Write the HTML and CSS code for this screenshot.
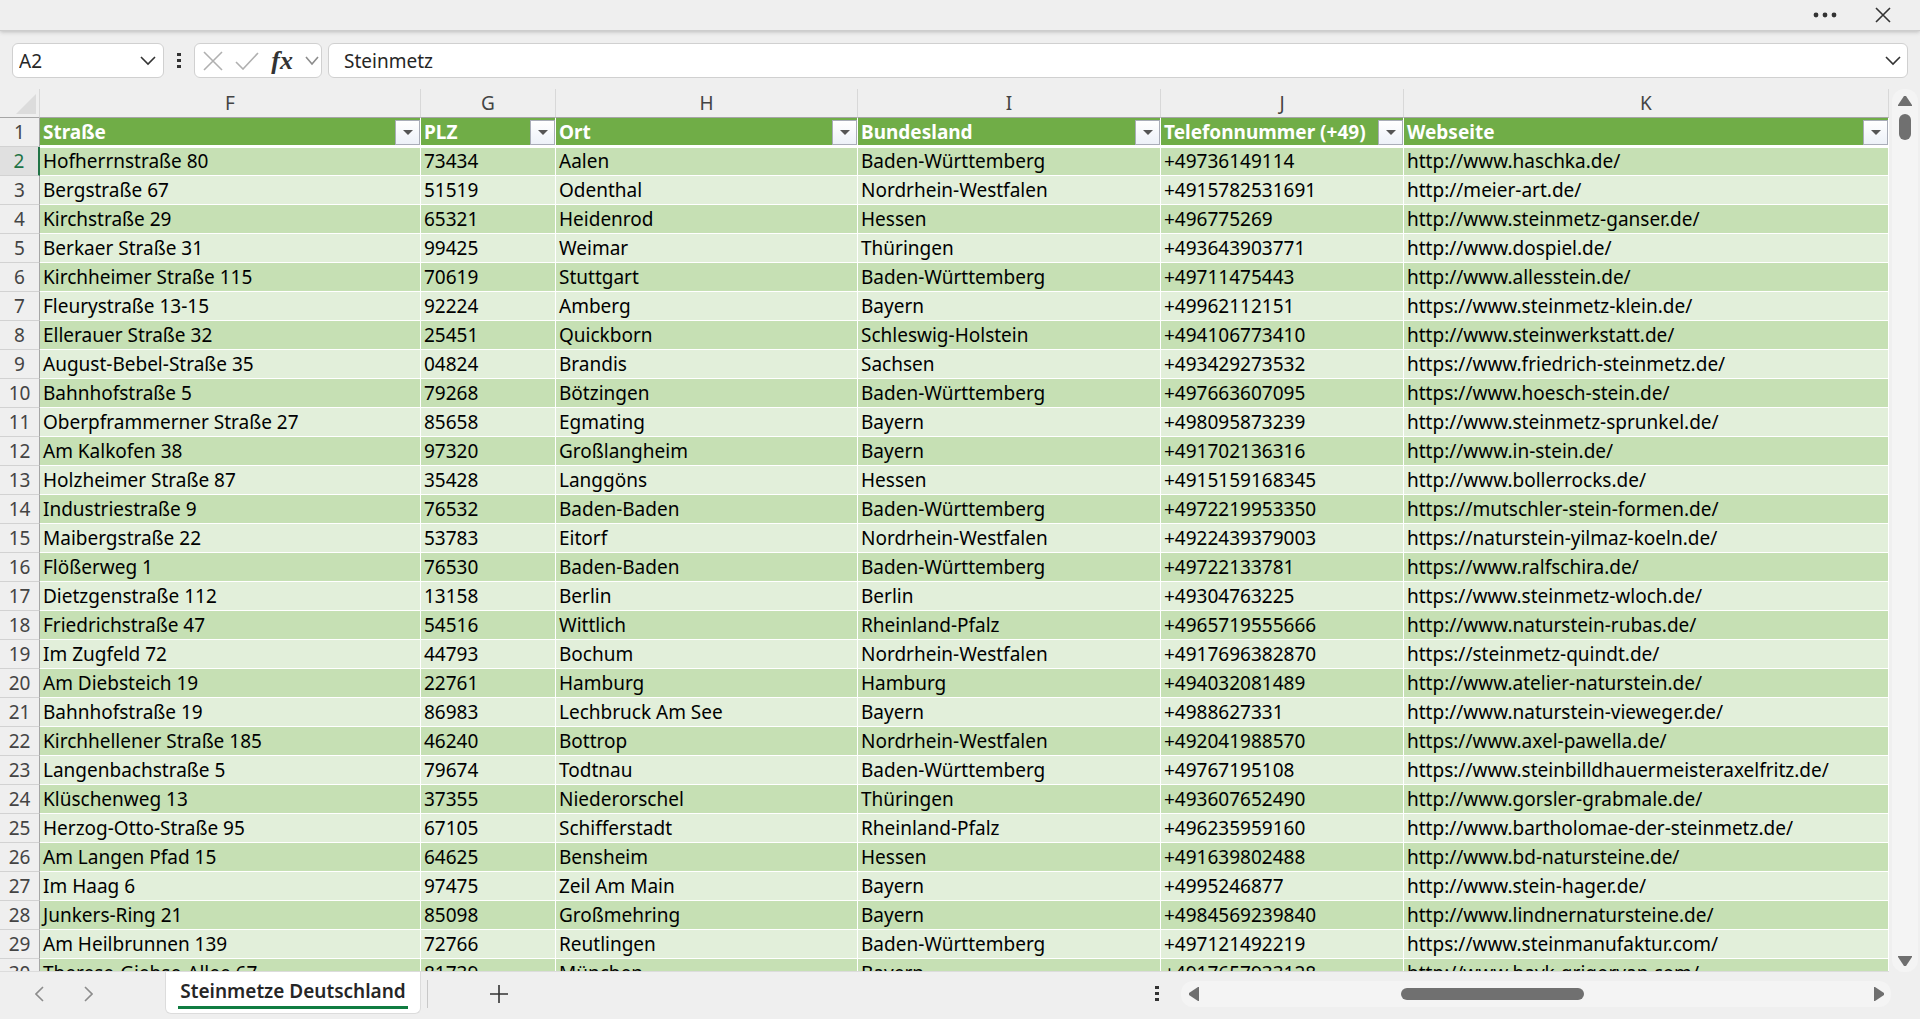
FILE: index.html
```html
<!DOCTYPE html>
<html lang="de">
    <head>
        <meta charset="utf-8">
        <title>Steinmetze Deutschland</title>
        <link rel="stylesheet" href="styles.css">
    </head>

    <body>
        <div class="topBar">
            <button class="iconButton" aria-label="Mehr">
                <svg width="24" height="6" viewBox="0 0 24 6"><circle cx="3" cy="3" r="2.4"/><circle cx="12" cy="3" r="2.4"/><circle cx="21" cy="3" r="2.4"/></svg>
            </button>
            <button class="iconButton" aria-label="Schließen">
                <svg class="line" width="16" height="16" viewBox="0 0 16 16"><path d="M1 1l14 14M15 1L1 15"/></svg>
            </button>
        </div>

        <div class="formulaBar">
            <div class="box nameBox">
                <input type="text" value="A2" aria-label="Namenfeld">
                <button class="iconButton" aria-label="Namen anzeigen"><svg class="line" width="16" height="10" viewBox="0 0 16 10"><path d="M1 1l7 7 7-7"/></svg></button>
            </div>
            <svg class="dots" width="4" height="16" viewBox="0 0 4 16"><path d="M0 0h4v3H0zM0 6h4v3H0zM0 12h4v3H0z"/></svg>
            <div class="box fxBox">
                <button class="iconButton" aria-label="Abbrechen"><svg class="line pale" width="20" height="20" viewBox="0 0 20 20"><path d="M1 1l18 18M19 1L1 19"/></svg></button>
                <button class="iconButton" aria-label="Eingeben"><svg class="line pale" width="24" height="18" viewBox="0 0 24 18"><path d="M1 10l7 7L23 1"/></svg></button>
                <button class="iconButton fx" aria-label="Funktion einfügen">fx</button>
                <button class="iconButton" aria-label="Funktionen"><svg class="line gray" width="14" height="10" viewBox="0 0 14 10"><path d="M1 1l6 7 6-7"/></svg></button>
            </div>
            <div class="box formulaBox">
                <input type="text" value="Steinmetz" aria-label="Bearbeitungsleiste">
                <button class="iconButton" aria-label="Erweitern"><svg class="line" width="16" height="10" viewBox="0 0 16 10"><path d="M1 1l7 7 7-7"/></svg></button>
            </div>
        </div>

        <div class="main">
            <div class="sheet">
                <table>
                    <colgroup>
                        <col class="colNum"><col class="colF"><col class="colG"><col class="colH"><col class="colI"><col class="colJ"><col>
                    </colgroup>
                    <thead>
                        <tr class="letters">
                            <th class="corner"><svg width="20" height="20" viewBox="0 0 20 20"><path d="M20 0v20H0z"/></svg></th>
                            <th>F</th><th>G</th><th>H</th><th>I</th><th>J</th><th>K</th>
                        </tr>
                        <tr class="titles">
                            <th class="num">1</th>
                            <th><div>Straße<button class="filter" aria-label="Straße filtern"></button></div></th>
                            <th><div>PLZ<button class="filter" aria-label="PLZ filtern"></button></div></th>
                            <th><div>Ort<button class="filter" aria-label="Ort filtern"></button></div></th>
                            <th><div>Bundesland<button class="filter" aria-label="Bundesland filtern"></button></div></th>
                            <th><div>Telefonnummer (+49)<button class="filter" aria-label="Telefonnummer filtern"></button></div></th>
                            <th><div>Webseite<button class="filter" aria-label="Webseite filtern"></button></div></th>
                        </tr>
                    </thead>
                    <tbody>
                        <tr class="active"><th>2</th><td>Hofherrnstraße 80</td><td>73434</td><td>Aalen</td><td>Baden-Württemberg</td><td>+49736149114</td><td>http://www.haschka.de/</td></tr>
                        <tr><th>3</th><td>Bergstraße 67</td><td>51519</td><td>Odenthal</td><td>Nordrhein-Westfalen</td><td>+4915782531691</td><td>http://meier-art.de/</td></tr>
                        <tr><th>4</th><td>Kirchstraße 29</td><td>65321</td><td>Heidenrod</td><td>Hessen</td><td>+496775269</td><td>http://www.steinmetz-ganser.de/</td></tr>
                        <tr><th>5</th><td>Berkaer Straße 31</td><td>99425</td><td>Weimar</td><td>Thüringen</td><td>+493643903771</td><td>http://www.dospiel.de/</td></tr>
                        <tr><th>6</th><td>Kirchheimer Straße 115</td><td>70619</td><td>Stuttgart</td><td>Baden-Württemberg</td><td>+49711475443</td><td>http://www.allesstein.de/</td></tr>
                        <tr><th>7</th><td>Fleurystraße 13-15</td><td>92224</td><td>Amberg</td><td>Bayern</td><td>+49962112151</td><td>https://www.steinmetz-klein.de/</td></tr>
                        <tr><th>8</th><td>Ellerauer Straße 32</td><td>25451</td><td>Quickborn</td><td>Schleswig-Holstein</td><td>+494106773410</td><td>http://www.steinwerkstatt.de/</td></tr>
                        <tr><th>9</th><td>August-Bebel-Straße 35</td><td>04824</td><td>Brandis</td><td>Sachsen</td><td>+493429273532</td><td>https://www.friedrich-steinmetz.de/</td></tr>
                        <tr><th>10</th><td>Bahnhofstraße 5</td><td>79268</td><td>Bötzingen</td><td>Baden-Württemberg</td><td>+497663607095</td><td>https://www.hoesch-stein.de/</td></tr>
                        <tr><th>11</th><td>Oberpframmerner Straße 27</td><td>85658</td><td>Egmating</td><td>Bayern</td><td>+498095873239</td><td>http://www.steinmetz-sprunkel.de/</td></tr>
                        <tr><th>12</th><td>Am Kalkofen 38</td><td>97320</td><td>Großlangheim</td><td>Bayern</td><td>+491702136316</td><td>http://www.in-stein.de/</td></tr>
                        <tr><th>13</th><td>Holzheimer Straße 87</td><td>35428</td><td>Langgöns</td><td>Hessen</td><td>+4915159168345</td><td>http://www.bollerrocks.de/</td></tr>
                        <tr><th>14</th><td>Industriestraße 9</td><td>76532</td><td>Baden-Baden</td><td>Baden-Württemberg</td><td>+4972219953350</td><td>https://mutschler-stein-formen.de/</td></tr>
                        <tr><th>15</th><td>Maibergstraße 22</td><td>53783</td><td>Eitorf</td><td>Nordrhein-Westfalen</td><td>+4922439379003</td><td>https://naturstein-yilmaz-koeln.de/</td></tr>
                        <tr><th>16</th><td>Flößerweg 1</td><td>76530</td><td>Baden-Baden</td><td>Baden-Württemberg</td><td>+49722133781</td><td>https://www.ralfschira.de/</td></tr>
                        <tr><th>17</th><td>Dietzgenstraße 112</td><td>13158</td><td>Berlin</td><td>Berlin</td><td>+49304763225</td><td>https://www.steinmetz-wloch.de/</td></tr>
                        <tr><th>18</th><td>Friedrichstraße 47</td><td>54516</td><td>Wittlich</td><td>Rheinland-Pfalz</td><td>+4965719555666</td><td>http://www.naturstein-rubas.de/</td></tr>
                        <tr><th>19</th><td>Im Zugfeld 72</td><td>44793</td><td>Bochum</td><td>Nordrhein-Westfalen</td><td>+4917696382870</td><td>https://steinmetz-quindt.de/</td></tr>
                        <tr><th>20</th><td>Am Diebsteich 19</td><td>22761</td><td>Hamburg</td><td>Hamburg</td><td>+494032081489</td><td>http://www.atelier-naturstein.de/</td></tr>
                        <tr><th>21</th><td>Bahnhofstraße 19</td><td>86983</td><td>Lechbruck Am See</td><td>Bayern</td><td>+4988627331</td><td>http://www.naturstein-vieweger.de/</td></tr>
                        <tr><th>22</th><td>Kirchhellener Straße 185</td><td>46240</td><td>Bottrop</td><td>Nordrhein-Westfalen</td><td>+492041988570</td><td>https://www.axel-pawella.de/</td></tr>
                        <tr><th>23</th><td>Langenbachstraße 5</td><td>79674</td><td>Todtnau</td><td>Baden-Württemberg</td><td>+49767195108</td><td>https://www.steinbilldhauermeisteraxelfritz.de/</td></tr>
                        <tr><th>24</th><td>Klüschenweg 13</td><td>37355</td><td>Niederorschel</td><td>Thüringen</td><td>+493607652490</td><td>http://www.gorsler-grabmale.de/</td></tr>
                        <tr><th>25</th><td>Herzog-Otto-Straße 95</td><td>67105</td><td>Schifferstadt</td><td>Rheinland-Pfalz</td><td>+496235959160</td><td>http://www.bartholomae-der-steinmetz.de/</td></tr>
                        <tr><th>26</th><td>Am Langen Pfad 15</td><td>64625</td><td>Bensheim</td><td>Hessen</td><td>+491639802488</td><td>http://www.bd-natursteine.de/</td></tr>
                        <tr><th>27</th><td>Im Haag 6</td><td>97475</td><td>Zeil Am Main</td><td>Bayern</td><td>+4995246877</td><td>http://www.stein-hager.de/</td></tr>
                        <tr><th>28</th><td>Junkers-Ring 21</td><td>85098</td><td>Großmehring</td><td>Bayern</td><td>+4984569239840</td><td>http://www.lindnernatursteine.de/</td></tr>
                        <tr><th>29</th><td>Am Heilbrunnen 139</td><td>72766</td><td>Reutlingen</td><td>Baden-Württemberg</td><td>+497121492219</td><td>https://www.steinmanufaktur.com/</td></tr>
                        <tr><th>30</th><td>Therese-Giehse-Allee 67</td><td>81739</td><td>München</td><td>Bayern</td><td>+4917657933128</td><td>http://www.hayk-grigoryan.com/</td></tr>
                    </tbody>
                </table>
            </div>
            <div class="scrollV">
                <button class="iconButton" aria-label="Nach oben"><svg class="arrow" width="14" height="10" viewBox="0 0 14 10"><path d="M6 0h2l6 9v1H0V9z"/></svg></button>
                <div class="thumb"></div>
                <button class="iconButton last" aria-label="Nach unten"><svg class="arrow" width="14" height="10" viewBox="0 0 14 10"><path d="M6 10h2l6-9V0H0v1z"/></svg></button>
            </div>
        </div>

        <div class="footer">
            <button class="iconButton" aria-label="Vorheriges Blatt"><svg class="line gray" width="9" height="16" viewBox="0 0 9 16"><path d="M8 1L1 8l7 7"/></svg></button>
            <button class="iconButton" aria-label="Nächstes Blatt"><svg class="line gray" width="9" height="16" viewBox="0 0 9 16"><path d="M1 1l7 7-7 7"/></svg></button>
            <button class="tab"><span>Steinmetze Deutschland</span></button>
            <div class="divider"></div>
            <button class="iconButton plus" aria-label="Neues Blatt"><svg class="line" width="18" height="18" viewBox="0 0 18 18"><path d="M9 0v18M0 9h18"/></svg></button>
            <svg class="dots" width="4" height="16" viewBox="0 0 4 16"><path d="M0 0h4v3H0zM0 6h4v3H0zM0 12h4v3H0z"/></svg>
            <div class="scrollH">
                <button class="iconButton" aria-label="Nach links"><svg class="arrow" width="10" height="14" viewBox="0 0 10 14"><path d="M0 6v2l9 6h1V0H9z"/></svg></button>
                <div class="thumb"></div>
                <button class="iconButton last" aria-label="Nach rechts"><svg class="arrow" width="10" height="14" viewBox="0 0 10 14"><path d="M10 6v2l-9 6H0V0h1z"/></svg></button>
            </div>
        </div>
    </body>
</html>
```
FILE: styles.css
```css
* {
    box-sizing: border-box;
}

body {
    margin: 0;
    height: 100vh;
    display: flex;
    flex-direction: column;
    overflow: hidden;
    background-color: #efefef;
    font-family: "Noto Sans", sans-serif;
    font-size: 19px;
    color: #000;
}

button, input {
    font: inherit;
    color: inherit;
    border: 0;
    padding: 0;
    background: none;
}

.iconButton {
    display: flex;
    align-items: center;
    justify-content: center;
}

svg {
    display: block;
    fill: #333;
}

.line {
    fill: none;
    stroke: #333;
    stroke-width: 1.6;
}

.line.pale {
    stroke: #b0b0b0;
}

.line.gray {
    stroke: #8c8c8c;
}

.topBar {
    flex: none;
    height: 31px;
    display: flex;
    align-items: center;
    justify-content: flex-end;
    gap: 38px;
    padding-right: 29px;
    border-bottom: 1px solid #cdcdcd;
    box-shadow: 0 1px 4px #bbb;
}

.formulaBar {
    flex: none;
    display: flex;
    align-items: center;
    padding: 12px 12px 11px;
    color: #262626;
}

.box {
    height: 35px;
    display: flex;
    align-items: center;
    background-color: #fff;
    border: 1px solid #d0d0d0;
    border-radius: 6px;
}

.box input {
    flex: 1;
    min-width: 0;
}

.nameBox {
    width: 152px;
    padding: 0 7px 0 6px;
}

.formulaBar .dots {
    margin: 0 13px;
}

.fxBox {
    width: 128px;
    justify-content: space-between;
    padding: 0 2px 0 8px;
    margin-right: 6px;
}

.fx {
    font-family: "Liberation Serif", serif;
    font-style: italic;
    font-weight: bold;
    font-size: 26px;
    line-height: 30px;
    color: #333;
}

.formulaBox {
    flex: 1;
    padding: 0 6px 0 15px;
}

.main {
    flex: 1;
    min-height: 0;
    display: flex;
}

.sheet {
    flex: 1;
    min-width: 0;
    overflow: hidden;
    border-bottom: 1px solid #dcdcdc;
}

table {
    width: 100%;
    table-layout: fixed;
    border-collapse: separate;
    border-spacing: 0;
    line-height: 24px;
}

.colNum { width: 40px; }
.colF { width: 381px; }
.colG { width: 135px; }
.colH { width: 302px; }
.colI { width: 303px; }
.colJ { width: 243px; }

th, td {
    height: 29px;
    padding: 0;
    white-space: nowrap;
    overflow: hidden;
}

td {
    padding-left: 3px;
    text-align: left;
    background-color: #e2efda;
    border-right: 1px solid #fff;
    border-bottom: 1px solid #fff;
}

tbody tr:nth-child(odd) td {
    background-color: #c6e0b4;
}

tbody tr:first-child td {
    box-shadow: inset 0 1px #fff;
}

tbody th {
    font-weight: normal;
    color: #444;
    border-right: 1px solid #a6a6a6;
    border-bottom: 1px solid #d2d2d2;
}

tbody .active th {
    color: #217346;
    background-color: #e0e0e0;
    border-right: 2px solid #217346;
}

.letters th {
    font-weight: normal;
    color: #444;
    border-right: 1px solid #d8d8d8;
    border-bottom: 1px solid #a6a6a6;
}

.corner svg {
    margin: 2px 3px 0 auto;
    fill: #dcdcdc;
}

.titles th {
    text-align: left;
    color: #fff;
    background-color: #70ad47;
    border-right: 1px solid #fff;
    border-bottom: 2px solid #fff;
}

.titles .num {
    font-weight: normal;
    text-align: center;
    color: #444;
    background-color: #efefef;
    border-right: 1px solid #a6a6a6;
    border-bottom: 1px solid #d2d2d2;
}

.titles div {
    display: flex;
    justify-content: space-between;
    align-items: center;
    height: 27px;
    padding-left: 3px;
}

.filter {
    width: 25px;
    height: 25px;
    margin-top: 2px;
    display: flex;
    align-items: center;
    justify-content: center;
    border: 1px solid #a9adb8;
    background-image: linear-gradient(#fff, #edf1f8);
}

.filter::before {
    content: "";
    border: 5px solid transparent;
    border-top-color: #555;
    border-bottom: 0;
}

.scrollV {
    flex: none;
    width: 26px;
    margin: 0 2px 0 3px;
    padding: 7px 0 6px;
    display: flex;
    flex-direction: column;
    align-items: center;
    gap: 8px;
    background-color: #f4f4f4;
    border-radius: 12px;
}

.arrow {
    fill: #6f6f6f;
}

.thumb {
    background-color: #707070;
    border-radius: 6px;
}

.scrollV .thumb {
    width: 12px;
    height: 26px;
}

.scrollV .last {
    margin-top: auto;
}

.footer {
    flex: none;
    height: 47px;
    display: flex;
    align-items: center;
    padding: 0 29px 3px 35px;
    gap: 40px;
}

.tab {
    align-self: flex-start;
    min-width: 256px;
    height: 42px;
    margin-left: 32px;
    padding: 0 12px;
    font-weight: 600;
    white-space: nowrap;
    color: #262626;
    background-color: #fff;
    border: 1px solid #dcdcdc;
    border-top: 0;
    border-radius: 0 0 6px 6px;
}

.tab span {
    display: block;
    line-height: 30px;
    border-bottom: 3px solid #107c41;
}

.divider {
    width: 1px;
    height: 28px;
    margin-left: -34px;
    background-color: #c8c8c8;
}

.plus {
    margin-left: 22px;
}

.footer .dots {
    margin-left: auto;
    margin-right: -18px;
}

.scrollH {
    width: 37vw;
    height: 26px;
    padding: 0 7px 0 8px;
    display: flex;
    align-items: center;
    background-color: #f4f4f4;
    border-radius: 12px;
}

.scrollH .thumb {
    width: 183px;
    height: 12px;
    margin-left: 202px;
}

.scrollH .last {
    margin-left: auto;
}
```
